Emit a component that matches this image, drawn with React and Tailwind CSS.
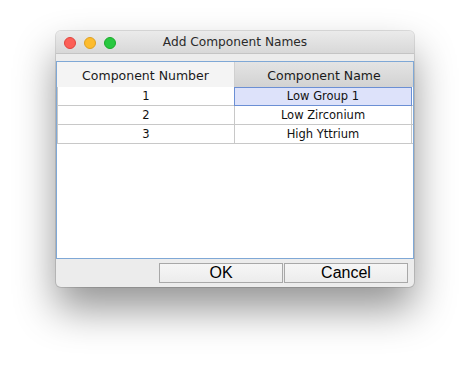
export default function App() {
  const rows = [
    ["1", "Low Group 1"],
    ["2", "Low Zirconium"],
    ["3", "High Yttrium"],
  ];
  return (
    <div className="w-[469px] h-[367px] bg-white pt-[31px] pl-[56px]" style={{ fontFamily: '"DejaVu Sans", "Liberation Sans", sans-serif' }}>
      <div className="w-[358px] h-[256px] rounded-[5px] bg-[#ececec] flex flex-col overflow-hidden shadow-[0_22px_40px_rgba(0,0,0,0.42),0_0_0_1px_rgba(0,0,0,0.12)]">
        {/* title bar */}
        <div className="h-[23px] shrink-0 relative flex items-center justify-center bg-gradient-to-b from-[#ebebeb] to-[#d8d8d8] border-b border-[#c4c4c4]">
          <div className="absolute left-[8px] top-[6px] flex gap-[8px]">
            <div className="w-[12px] h-[12px] rounded-full bg-[#fc5f57] border border-[#e0443e]" />
            <div className="w-[12px] h-[12px] rounded-full bg-[#fdbc2e] border border-[#dea123]" />
            <div className="w-[12px] h-[12px] rounded-full bg-[#28c840] border border-[#1aab29]" />
          </div>
          <span className="text-[12.2px] text-[#2a2a2a] leading-none pt-px">Add Component Names</span>
        </div>
        {/* gap */}
        <div className="h-[7px] shrink-0 bg-[#ececec]" />
        {/* table panel */}
        <div className="h-[198px] shrink-0 border border-[#7fa8d6] bg-white flex flex-col">
          <div className="flex h-[25px] shrink-0 text-[12.5px] text-[#1a1a1a]">
            <div className="w-[177px] flex items-center justify-center bg-[#f4f4f4] pt-[3px]">Component Number</div>
            <div className="flex-1 flex items-center justify-center bg-gradient-to-b from-[#e4e4e4] to-[#d2d2d2] border-l border-[#d0d0d0] pt-[3px]">Component Name</div>
          </div>
          <div className="flex flex-col text-[11.5px] text-[#111]">
            {rows.map((r, i) => (
              <div key={i} className="flex h-[19px] border-b border-[#c8c8c8]">
                <div className="w-[177px] flex items-center justify-center border-l border-[#c8c8c8] pt-px">{r[0]}</div>
                {i === 0 ? (
                  <div className="flex-1 flex items-center justify-center bg-[#dde2fa] border border-[#6b8fd4] -mb-px mr-px pt-px">{r[1]}</div>
                ) : (
                  <div className="flex-1 flex items-center justify-center border-l border-r border-[#c8c8c8] mr-px pt-px">{r[1]}</div>
                )}
              </div>
            ))}
          </div>
        </div>
        {/* buttons */}
        <div className="flex-1 flex justify-end pr-[6px] pt-[4px] gap-[1px]" style={{ fontFamily: '"Liberation Sans", Arial, sans-serif' }}>
          <button className="w-[124px] h-[20px] border border-[#a8a8a8] bg-gradient-to-b from-[#f6f6f6] to-[#ececec] text-[16px] leading-none text-black flex items-center justify-center">OK</button>
          <button className="w-[124px] h-[20px] border border-[#a8a8a8] bg-gradient-to-b from-[#f6f6f6] to-[#ececec] text-[16px] leading-none text-black flex items-center justify-center">Cancel</button>
        </div>
      </div>
    </div>
  );
}
